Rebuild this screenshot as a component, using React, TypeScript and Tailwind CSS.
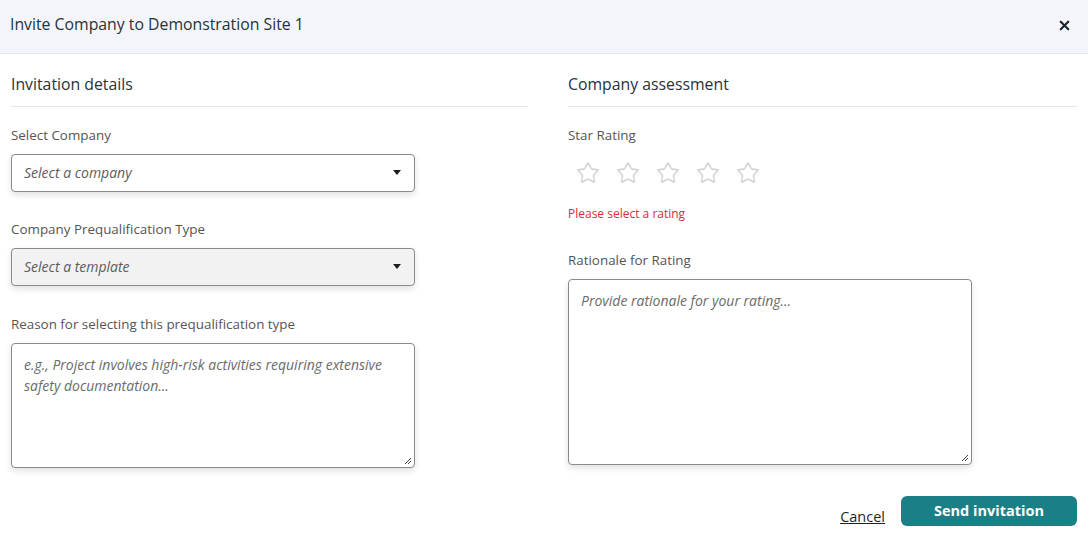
import { Star, X } from "lucide-react";

function Caret() {
  return (
    <svg width="8" height="5" viewBox="0 0 8 5" className="shrink-0">
      <path d="M0 0h8L4 5z" fill="#1f1f1f" />
    </svg>
  );
}

function SelectBox({ placeholder, disabled }: { placeholder: string; disabled?: boolean }) {
  return (
    <div
      className={`flex h-[38px] w-[404px] items-center justify-between rounded-[4px] border border-[#8a8a8a] pl-3 pr-[13px] shadow-[0_3px_6px_rgba(0,0,0,0.12)] ${
        disabled ? "bg-[#f2f2f2]" : "bg-white"
      }`}
    >
      <span className="text-[14px] italic text-[#5c5c5c]">{placeholder}</span>
      <Caret />
    </div>
  );
}

function TextArea({ placeholder, height }: { placeholder: string; height: string }) {
  return (
    <div
      className={`relative w-[404px] rounded-[4px] border border-[#8a8a8a] bg-white px-3 pt-[10px] shadow-[0_3px_6px_rgba(0,0,0,0.12)] ${height}`}
    >
      <p className="text-[14px] italic leading-[21px] text-[#6b6b6b]">{placeholder}</p>
      <svg width="8" height="8" viewBox="0 0 8 8" className="absolute bottom-[2px] right-[2px]">
        <path d="M7 1L1 7M7 4L4 7" stroke="#444" strokeWidth="1" />
      </svg>
    </div>
  );
}

function Label({ children }: { children: string }) {
  return <div className="text-[13.4px] text-[#555]">{children}</div>;
}

export default function App() {
  return (
    <main className="min-h-screen bg-white font-['Open_Sans',sans-serif] text-[#243040]">
      <header className="flex h-[54px] items-center justify-between border-b border-[#e3e5ea] bg-[#f4f5fa] pb-[3px] pl-[10px] pr-[16px]">
        <h1 className="text-[15.8px] text-[#263238]">Invite Company to Demonstration Site 1</h1>
        <X size={15} strokeWidth={3.5} color="#1b2430" />
      </header>

      <div className="flex gap-10 px-[11px] pt-[19px]">
        <section className="w-[517px]">
          <h2 className="border-b border-[#e6e6e6] pb-[9px] text-[15.8px] text-[#263238]">Invitation details</h2>
          <div className="mt-[18px]">
            <Label>Select Company</Label>
            <div className="mt-[9px]">
              <SelectBox placeholder="Select a company" />
            </div>
          </div>
          <div className="mt-[27px]">
            <Label>Company Prequalification Type</Label>
            <div className="mt-[9px]">
              <SelectBox placeholder="Select a template" disabled />
            </div>
          </div>
          <div className="mt-[28px]">
            <Label>Reason for selecting this prequalification type</Label>
            <div className="mt-[9px]">
              <TextArea
                height="h-[125px]"
                placeholder="e.g., Project involves high-risk activities requiring extensive safety documentation..."
              />
            </div>
          </div>
        </section>

        <section className="flex-1">
          <h2 className="border-b border-[#e6e6e6] pb-[9px] text-[15.8px] text-[#263238]">Company assessment</h2>
          <div className="mt-[18px]">
            <Label>Star Rating</Label>
            <div className="mt-[16px] flex gap-[16px] pl-[8px]">
              {[0, 1, 2, 3, 4].map((i) => (
                <Star key={i} size={24} strokeWidth={1.6} color="#d4d4d4" />
              ))}
            </div>
            <div className="mt-[20px] text-[12px] text-[#e0283c]">Please select a rating</div>
          </div>
          <div className="mt-[27px]">
            <Label>Rationale for Rating</Label>
            <div className="mt-[9px]">
              <TextArea height="h-[186px]" placeholder="Provide rationale for your rating..." />
            </div>
          </div>
        </section>
      </div>

      <footer className="mt-[26px] flex items-center justify-end gap-4 pr-[11px]">
        <button className="mt-[12px] text-[14.5px] text-[#1f1f1f] underline">Cancel</button>
        <button className="h-[30px] w-[176px] rounded-[6px] bg-[#1b7f86] text-[14.5px] font-bold text-white">
          Send invitation
        </button>
      </footer>
    </main>
  );
}
